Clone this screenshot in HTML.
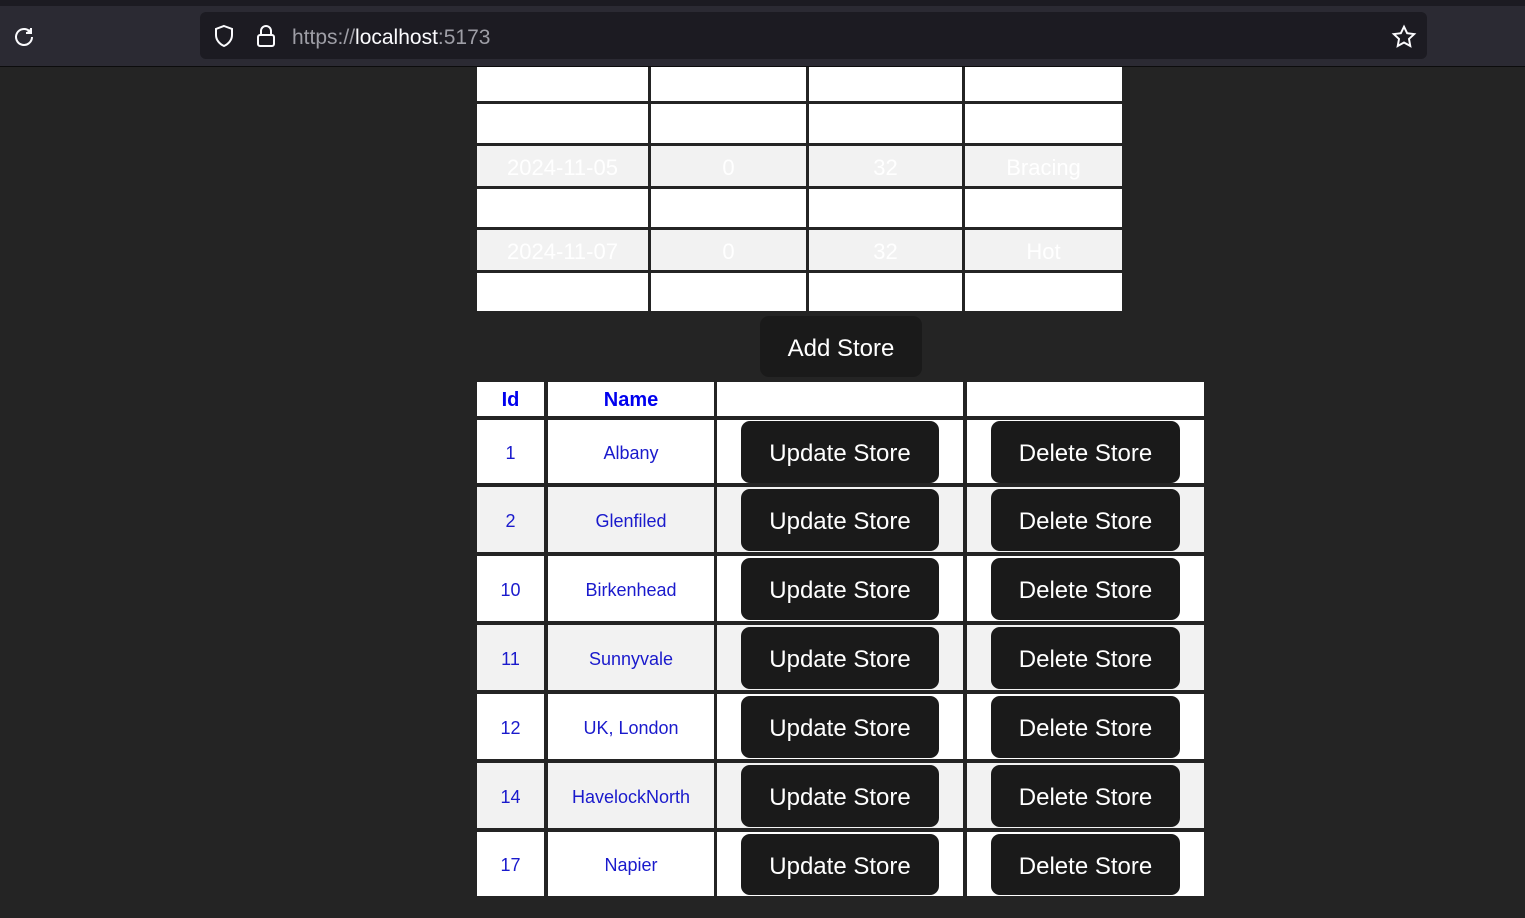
<!DOCTYPE html>
<html><head><meta charset="utf-8"><style>
*{margin:0;padding:0;box-sizing:border-box}
body{width:1525px;height:918px;background:#242424;font-family:"Liberation Sans",sans-serif;position:relative;overflow:hidden}
.a{position:absolute}
.c{position:absolute;display:flex;align-items:center;justify-content:center;padding-top:3px}
.w{background:#fff}.g{background:#f2f2f2}
.t{color:#fff;font-size:22px}
.b{position:absolute;background:#1a1a1a;color:#fff;border-radius:9px;font-size:24px;display:flex;align-items:center;justify-content:center;padding-top:4px}
.l{color:#1a1acc;font-size:18px}
.h{color:#0000ee;font-weight:bold;font-size:20px}
</style></head><body>
<div class="a" style="left:0;top:0;width:1525px;height:6px;background:#1c1b22"></div>
<div class="a" style="left:0;top:6px;width:1525px;height:61px;background:#2b2a33;border-bottom:1px solid #0c0c0d"></div>
<svg class="a" style="left:13px;top:25px" width="24" height="24" viewBox="0 0 24 24" fill="none" stroke="#fbfbfe" stroke-width="2"><path d="M19 12a8 8 0 1 1-2.5-5.8"/><path d="M18 3v5h-5" fill="#fbfbfe"/></svg>
<div class="a" style="left:200px;top:12px;width:1227px;height:47px;background:#1c1b22;border-radius:6px"></div>
<svg class="a" style="left:212px;top:24px" width="24" height="24" viewBox="0 0 24 24" fill="none" stroke="#fbfbfe" stroke-width="2"><path d="M12 2l8 3v6c0 5-3.5 9-8 11-4.5-2-8-6-8-11V5z"/></svg>
<svg class="a" style="left:255px;top:24px" width="22" height="24" viewBox="0 0 22 24" fill="none" stroke="#fbfbfe" stroke-width="2"><path d="M6 11V7a5 5 0 0 1 10 0v4"/><rect x="3" y="11" width="16" height="11" rx="2"/></svg>
<div class="a" style="left:292px;top:26px;font-size:21px;color:#9e9ea6">https://<span style="color:#fbfbfe">localhost</span>:5173</div>
<svg class="a" style="left:1391px;top:24px" width="26" height="26" viewBox="0 0 24 24" fill="none" stroke="#fbfbfe" stroke-width="1.8"><path d="M12 2.5l2.9 6 6.5.8-4.8 4.5 1.2 6.5L12 17.1l-5.8 3.2 1.2-6.5L2.6 9.3l6.5-.8z"/></svg>

<div class="c w" style="left:477px;top:67px;width:171px;height:34px"></div><div class="c w" style="left:651px;top:67px;width:155px;height:34px"></div><div class="c w" style="left:809px;top:67px;width:153px;height:34px"></div><div class="c w" style="left:965px;top:67px;width:157px;height:34px"></div>
<div class="c w" style="left:477px;top:104px;width:171px;height:39px"></div><div class="c w" style="left:651px;top:104px;width:155px;height:39px"></div><div class="c w" style="left:809px;top:104px;width:153px;height:39px"></div><div class="c w" style="left:965px;top:104px;width:157px;height:39px"></div>
<div class="c g t" style="left:477px;top:146px;width:171px;height:40px">2024-11-05</div><div class="c g t" style="left:651px;top:146px;width:155px;height:40px">0</div><div class="c g t" style="left:809px;top:146px;width:153px;height:40px">32</div><div class="c g t" style="left:965px;top:146px;width:157px;height:40px">Bracing</div>
<div class="c w" style="left:477px;top:189px;width:171px;height:38px"></div><div class="c w" style="left:651px;top:189px;width:155px;height:38px"></div><div class="c w" style="left:809px;top:189px;width:153px;height:38px"></div><div class="c w" style="left:965px;top:189px;width:157px;height:38px"></div>
<div class="c g t" style="left:477px;top:230px;width:171px;height:40px">2024-11-07</div><div class="c g t" style="left:651px;top:230px;width:155px;height:40px">0</div><div class="c g t" style="left:809px;top:230px;width:153px;height:40px">32</div><div class="c g t" style="left:965px;top:230px;width:157px;height:40px">Hot</div>
<div class="c w" style="left:477px;top:273px;width:171px;height:38px"></div><div class="c w" style="left:651px;top:273px;width:155px;height:38px"></div><div class="c w" style="left:809px;top:273px;width:153px;height:38px"></div><div class="c w" style="left:965px;top:273px;width:157px;height:38px"></div>

<div class="b" style="left:760px;top:316px;width:162px;height:61px">Add Store</div>

<div class="c w h" style="left:477px;top:382px;width:67px;height:34px">Id</div>
<div class="c w h" style="left:548px;top:382px;width:166px;height:34px">Name</div>
<div class="c w" style="left:717px;top:382px;width:246px;height:34px"></div>
<div class="c w" style="left:967px;top:382px;width:237px;height:34px"></div>

<div class="c w l" style="left:477px;top:420px;width:67px;height:63px">1</div><div class="c w l" style="left:548px;top:420px;width:166px;height:63px">Albany</div><div class="c w" style="left:717px;top:420px;width:246px;height:63px"></div><div class="c w" style="left:967px;top:420px;width:237px;height:63px"></div>
<div class="b" style="left:741px;top:421px;width:198px;height:62px">Update Store</div><div class="b" style="left:991px;top:421px;width:189px;height:62px">Delete Store</div>

<div class="c g l" style="left:477px;top:487px;width:67px;height:65px">2</div><div class="c g l" style="left:548px;top:487px;width:166px;height:65px">Glenfiled</div><div class="c g" style="left:717px;top:487px;width:246px;height:65px"></div><div class="c g" style="left:967px;top:487px;width:237px;height:65px"></div>
<div class="b" style="left:741px;top:489px;width:198px;height:62px">Update Store</div><div class="b" style="left:991px;top:489px;width:189px;height:62px">Delete Store</div>

<div class="c w l" style="left:477px;top:556px;width:67px;height:65px">10</div><div class="c w l" style="left:548px;top:556px;width:166px;height:65px">Birkenhead</div><div class="c w" style="left:717px;top:556px;width:246px;height:65px"></div><div class="c w" style="left:967px;top:556px;width:237px;height:65px"></div>
<div class="b" style="left:741px;top:558px;width:198px;height:62px">Update Store</div><div class="b" style="left:991px;top:558px;width:189px;height:62px">Delete Store</div>

<div class="c g l" style="left:477px;top:625px;width:67px;height:65px">11</div><div class="c g l" style="left:548px;top:625px;width:166px;height:65px">Sunnyvale</div><div class="c g" style="left:717px;top:625px;width:246px;height:65px"></div><div class="c g" style="left:967px;top:625px;width:237px;height:65px"></div>
<div class="b" style="left:741px;top:627px;width:198px;height:62px">Update Store</div><div class="b" style="left:991px;top:627px;width:189px;height:62px">Delete Store</div>

<div class="c w l" style="left:477px;top:694px;width:67px;height:65px">12</div><div class="c w l" style="left:548px;top:694px;width:166px;height:65px">UK, London</div><div class="c w" style="left:717px;top:694px;width:246px;height:65px"></div><div class="c w" style="left:967px;top:694px;width:237px;height:65px"></div>
<div class="b" style="left:741px;top:696px;width:198px;height:62px">Update Store</div><div class="b" style="left:991px;top:696px;width:189px;height:62px">Delete Store</div>

<div class="c g l" style="left:477px;top:763px;width:67px;height:65px">14</div><div class="c g l" style="left:548px;top:763px;width:166px;height:65px">HavelockNorth</div><div class="c g" style="left:717px;top:763px;width:246px;height:65px"></div><div class="c g" style="left:967px;top:763px;width:237px;height:65px"></div>
<div class="b" style="left:741px;top:765px;width:198px;height:62px">Update Store</div><div class="b" style="left:991px;top:765px;width:189px;height:62px">Delete Store</div>

<div class="c w l" style="left:477px;top:832px;width:67px;height:64px">17</div><div class="c w l" style="left:548px;top:832px;width:166px;height:64px">Napier</div><div class="c w" style="left:717px;top:832px;width:246px;height:64px"></div><div class="c w" style="left:967px;top:832px;width:237px;height:64px"></div>
<div class="b" style="left:741px;top:834px;width:198px;height:61px">Update Store</div><div class="b" style="left:991px;top:834px;width:189px;height:61px">Delete Store</div>
</body></html>
